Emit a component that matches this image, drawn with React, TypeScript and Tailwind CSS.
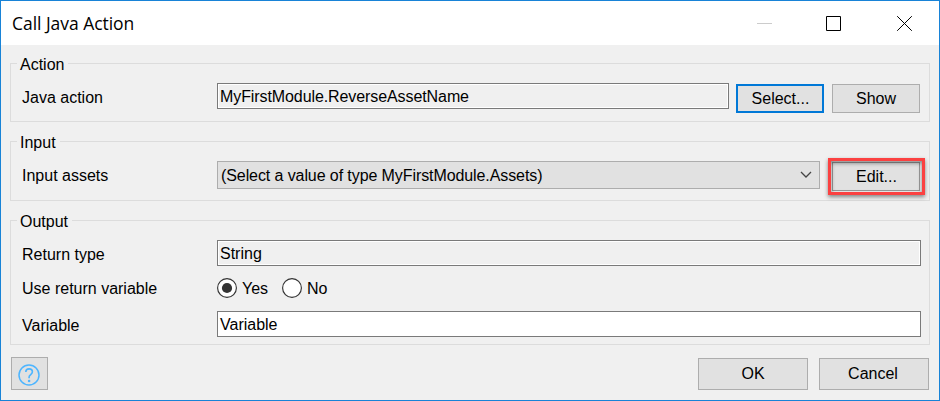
import type { ReactNode } from "react";

function Group({ title, legend, className, children }: { title: string; legend: string; className: string; children: ReactNode }) {
  return (
    <section className={`mx-[9px] border border-[#dcdcdc] ${className}`}>
      <h2 className={`-mt-[10px] ml-[6px] h-5 bg-[#f0f0f0] pl-[3px] leading-[21px] ${legend}`}>{title}</h2>
      {children}
    </section>
  );
}

function Label({ children, className = "" }: { children: ReactNode; className?: string }) {
  return <span className={`ml-[11px] w-[195px] shrink-0 ${className}`}>{children}</span>;
}

function Field({ children, className }: { children: ReactNode; className: string }) {
  return (
    <div className={`h-[26px] shrink-0 border border-[#7a7a7a] pl-[2px] leading-[26px] ${className}`}>{children}</div>
  );
}

function Button({ children, className }: { children: ReactNode; className: string }) {
  return (
    <button className={`flex shrink-0 items-center justify-center bg-[#e1e1e1] ${className}`}>{children}</button>
  );
}

function Radio({ checked }: { checked?: boolean }) {
  return (
    <svg width="20" height="20" viewBox="0 0 20 20" className="shrink-0">
      <circle cx="10" cy="10" r="9.4" fill="#fff" stroke="#333" strokeWidth="1.15" />
      {checked && <circle cx="10" cy="10" r="5.1" fill="#333" />}
    </svg>
  );
}

export default function App() {
  return (
    <main className="flex h-[401px] w-[940px] flex-col overflow-hidden border border-[#1883d7] bg-[#f0f0f0] font-['Liberation_Sans',Arial,sans-serif] text-[16px] text-black">
      <header className="flex h-11 shrink-0 items-center justify-between bg-white pl-[11px]">
        <h1 className="font-['Open_Sans','Noto_Sans',sans-serif] text-[17.5px] tracking-[-0.04px]">Call Java Action</h1>
        <div className="mr-[26px] flex items-center">
          <svg width="156" height="17" viewBox="0 0 156 17" fill="none">
            <path d="M0 8.5h15" stroke="#ccc" />
            <path d="M69.5 1.5h14v14h-14z" stroke="#000" />
            <path d="M140.2 1.2l14.6 14.6m0-14.6l-14.6 14.6" stroke="#000" strokeWidth="1" />
          </svg>
        </div>
      </header>

      <Group title="Action" legend="w-[51px]" className="mt-[18px] h-[59px]">
        <div className="mt-[9px] flex items-start">
          <Label className="leading-[29px]">Java action</Label>
          <Field className="w-[512px] tracking-[-0.09px] shadow-[inset_0_0_0_1px_#fff]">MyFirstModule.ReverseAssetName</Field>
          <Button className="mt-px ml-[7px] h-[29px] w-[88px] border-2 border-[#0078d7] pl-px">Select...</Button>
          <Button className="mt-px ml-2 h-[29px] w-[88px] border border-[#adadad]">Show</Button>
        </div>
      </Group>

      <Group title="Input" legend="w-[43px]" className="mt-[19px] h-[60px]">
        <div className="mt-[6px] flex items-start">
          <Label className="mt-[3px] leading-[29px]">Input assets</Label>
          <div className="mt-[3px] flex h-7 w-[603px] items-center justify-between border border-[#adadad] bg-[#e1e1e1] pr-[7px] pl-[3px]">
            <span className="pt-[2px] tracking-[-0.09px]">(Select a value of type MyFirstModule.Assets)</span>
            <svg width="12" height="8" viewBox="0 0 12 8" fill="none" stroke="#444" strokeWidth="1.3">
              <path d="M1 1l5 5 5-5" />
            </svg>
          </div>
          <div className="ml-2 h-[37px] w-[97px] shrink-0 border-[3px] border-[#fb4141] p-px shadow-[0_2px_4px_0_#00000073]">
            <div className="relative h-[29px] w-[88px]">
              <Button className="h-[29px] w-[88px] border border-[#999] pl-px">Edit...</Button>
              <div className="absolute -top-px -left-px h-[31px] w-[91px] shadow-[inset_0_2px_4px_0_#00000073]" />
            </div>
          </div>
        </div>
      </Group>

      <Group title="Output" legend="w-[55px]" className="mt-[19px] h-[125px]">
        <div className="mt-[9px] flex items-start">
          <Label className="leading-[29px]">Return type</Label>
          <Field className="w-[704px] shadow-[inset_0_0_0_1px_#fff]">String</Field>
        </div>
        <div className="mt-[9px] flex h-5 items-center">
          <Label className="pt-[2px]">Use return variable</Label>
          <Radio checked />
          <span className="ml-[5px] w-10 pt-[2px]">Yes</span>
          <Radio />
          <span className="ml-[5px] pt-[2px]">No</span>
        </div>
        <div className="mt-[13px] flex items-start">
          <Label className="leading-[29px]">Variable</Label>
          <Field className="w-[704px] bg-white">Variable</Field>
        </div>
      </Group>

      <footer className="mt-3 flex items-start pr-[10px] pl-[10px]">
        <Button className="h-[33px] w-[37px] border border-[#adadad] pr-[2px]">
          <svg width="22" height="22" viewBox="0 0 22 22" fill="none" stroke="#4db5ff" strokeWidth="1.6" className="mt-[3px]">
            <circle cx="11" cy="11" r="10" strokeWidth="1.5" />
            <path d="M7.8 8.1c0-2 1.4-3.2 3.3-3.2 2 0 3.3 1.2 3.3 2.9 0 2.7-3.3 2.8-3.3 5.3v1.2" />
            <circle cx="11.1" cy="17" r="1.3" fill="#4db5ff" stroke="none" />
          </svg>
        </Button>
        <Button className="mt-px ml-auto h-8 w-[110px] border border-[#adadad]">OK</Button>
        <Button className="mt-px ml-[11px] h-8 w-[110px] border border-[#adadad] pr-[2px]">Cancel</Button>
      </footer>
    </main>
  );
}
